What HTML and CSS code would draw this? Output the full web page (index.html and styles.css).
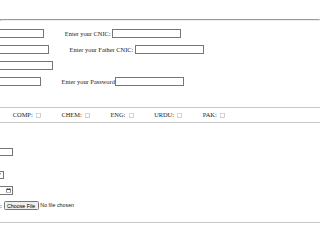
FILE: index.html
```html
<!DOCTYPE html>
<html lang="en">
<head>
    <meta charset="UTF-8">
    <meta name="viewport" content="width=device-width, initial-scale=1.0">
    <title>Student Registration</title>
    <link rel="stylesheet" href="styles.css">
</head>
<body>
    <div class="page">
        <hr>
        <!-- personal details -->
        <div class="details">
            <div class="row">
                <input type="text" class="field first r1">
                <label>Enter your CNIC:</label>
                <input type="text" class="field">
            </div>
            <div class="row">
                <input type="text" class="field first r2">
                <label>Enter your Father CNIC:</label>
                <input type="text" class="field">
            </div>
            <div class="row">
                <input type="text" class="field first r3">
            </div>
            <div class="row">
                <input type="text" class="field first r4">
                <label class="tight">Enter your Password</label>
                <input type="password" class="field">
            </div>
        </div>
        <hr class="soft">
        <!-- subjects -->
        <div class="subjects">
            <label>COMP: <input type="checkbox"></label>
            <label>CHEM: <input type="checkbox"></label>
            <label>ENG: <input type="checkbox"></label>
            <label>URDU: <input type="checkbox"></label>
            <label>PAK: <input type="checkbox"></label>
        </div>
        <hr class="soft">
        <!-- other info -->
        <div class="extra">
            <div class="line spaced">
                <input type="text" class="field age">
            </div>
            <div class="line">
                <select class="city">
                    <option>Select City</option>
                </select>
            </div>
            <div class="line">
                <input type="date" class="dob">
            </div>
            <div class="line upload">
                <label>Upload Picture:</label>
                <input type="file">
            </div>
        </div>
        <hr class="soft">
    </div>
</body>
</html>
```

FILE: styles.css
```css
body {
    margin: 0;
    font-family: "Liberation Serif", "Times New Roman", serif;
    color: #222;
    background: #fff;
    overflow: hidden;
}
.page {
    zoom: 0.4;
    width: 800px;
    padding-top: 40px;
}
hr {
    margin: 8px 0;
}
hr.soft {
    border: none;
    border-top: 3px solid #c8c8c8;
}
.details {
    display: flex;
    flex-direction: column;
    gap: 19px;
    padding: 12px 0 46px;
}
.row {
    display: flex;
    align-items: center;
    height: 21px;
}
.field {
    box-sizing: border-box;
    width: 173px;
    height: 21px;
    font-family: "Liberation Sans", Arial, sans-serif;
}
.row label {
    margin-right: 4px;
}
.row label.tight {
    margin-right: 0;
}
.first {
    margin-right: 52px;
}
.r1 { margin-left: -63px; }
.r2 { margin-left: -51px; }
.r3 { margin-left: -41px; }
.r4 { margin-left: -71px; }
.subjects {
    display: flex;
    align-items: center;
    gap: 48px;
    height: 19px;
    padding-left: 32px;
}
.subjects input {
    vertical-align: middle;
}
.extra {
    padding: 53px 0 21px;
}
.line {
    display: flex;
    align-items: center;
    gap: 4px;
    height: 22px;
    margin-top: 16px;
}
.line.spaced {
    margin-top: 0;
    margin-bottom: 37px;
}
.age {
    margin-left: -141px;
}
.city {
    width: 80px;
    margin-left: -70px;
    font-family: "Liberation Sans", Arial, sans-serif;
}
.dob {
    width: 140px;
    margin-left: -113px;
    font-family: "Liberation Sans", Arial, sans-serif;
}
.upload {
    margin-left: -96px;
}
.upload input {
    font-family: "Liberation Sans", Arial, sans-serif;
}
```
